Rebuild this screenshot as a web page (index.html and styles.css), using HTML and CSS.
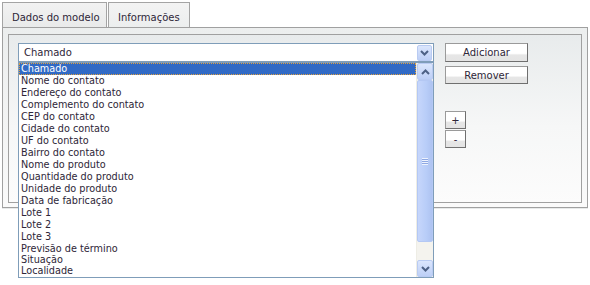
FILE: index.html
```html
<!DOCTYPE html>
<html>
<head>
<meta charset="utf-8">
<link rel="stylesheet" href="styles.css">
</head>
<body>
<div class="tabs">
  <div class="tab">Dados do modelo</div>
  <div class="tab active">Informações</div>
</div>
<div class="panel">
  <div class="box">
    <div class="left">
      <div class="select">
        <span class="value">Chamado</span>
        <span class="drop"><svg width="9" height="6" viewBox="0 0 9 6"><path d="M1 1 L4.5 4.5 L8 1" fill="none" stroke="#4d6185" stroke-width="2"/></svg></span>
      </div>
      <div class="listbox">
        <ul class="items">
          <li class="sel">Chamado</li>
          <li>Nome do contato</li>
          <li>Endereço do contato</li>
          <li>Complemento do contato</li>
          <li>CEP do contato</li>
          <li>Cidade do contato</li>
          <li>UF do contato</li>
          <li>Bairro do contato</li>
          <li>Nome do produto</li>
          <li>Quantidade do produto</li>
          <li>Unidade do produto</li>
          <li>Data de fabricação</li>
          <li>Lote 1</li>
          <li>Lote 2</li>
          <li>Lote 3</li>
          <li class="tight">Previsão de término</li>
          <li class="tight">Situação</li>
          <li class="tight">Localidade</li>
        </ul>
        <div class="scrollbar">
          <span class="sbtn"><svg width="9" height="6" viewBox="0 0 9 6"><path d="M1 5 L4.5 1.5 L8 5" fill="none" stroke="#4d6185" stroke-width="2"/></svg></span>
          <span class="thumb"><span class="grip"></span></span>
          <span class="track"></span>
          <span class="sbtn"><svg width="9" height="6" viewBox="0 0 9 6"><path d="M1 1 L4.5 4.5 L8 1" fill="none" stroke="#4d6185" stroke-width="2"/></svg></span>
        </div>
      </div>
    </div>
    <div class="buttons">
      <div class="btn wide">Adicionar</div>
      <div class="btn wide">Remover</div>
      <div class="small-group">
        <div class="btn small">+</div>
        <div class="btn small">-</div>
      </div>
    </div>
  </div>
</div>
</body>
</html>
```

FILE: styles.css
```css
html, body {
  margin: 0;
  padding: 0;
  background: #ffffff;
}
body {
  min-height: 285px;
  font-family: "DejaVu Sans", Verdana, sans-serif;
  font-size: 9.7px;
  color: #2e2638;
}
.tabs {
  display: flex;
  margin: 2px 0 0 2px;
  height: 25px;
}
.tab {
  box-sizing: border-box;
  width: 105px;
  height: 25px;
  border: 1px solid #a4a4a4;
  border-bottom: none;
  background: linear-gradient(#f2f2f2, #e9eaea);
  padding: 9px 0 0 9px;
  font-size: 10px;
}
.tab.active {
  width: 82px;
  margin-left: 1px;
  background: linear-gradient(#f3f3f3, #eceeee);
  padding-left: 9px;
}
.panel {
  box-sizing: border-box;
  width: 586px;
  height: 181px;
  margin-left: 2px;
  border: 1px solid #a0a0a0;
  padding: 6px 5px 5px 5px;
  background: linear-gradient(#eceeee, #fafafa);
  box-shadow: 0 1px 0 #e8eaea;
}
.box {
  box-sizing: border-box;
  height: 169px;
  border: 1px solid #a0a0a0;
  background: linear-gradient(#e8ebec 0%, #f6f7f7 55%, #fcfcfc 100%);
  display: flex;
  padding: 8px 0 0 9px;
  gap: 11px;
}
.left {
  position: relative;
  width: 416px;
}
.select {
  box-sizing: border-box;
  height: 19px;
  border: 1px solid #7f9db9;
  background: #ffffff;
  display: flex;
  align-items: center;
  justify-content: space-between;
  padding: 0 1px 0 5px;
  font-size: 10px;
}
.drop, .sbtn {
  box-sizing: border-box;
  width: 15px;
  height: 16px;
  border: 1px solid #b9cbf2;
  border-radius: 2px;
  background: linear-gradient(#dbe6fd, #bdcff6);
  display: flex;
  align-items: center;
  justify-content: center;
}
.listbox {
  position: absolute;
  left: 0;
  top: 19px;
  z-index: 5;
  width: 416px;
  height: 216px;
  box-sizing: border-box;
  border: 1px solid #7f9db9;
  background: #ffffff;
  display: flex;
}
.items {
  list-style: none;
  margin: 0;
  padding: 0;
  flex: 1;
  overflow: hidden;
}
.items li {
  height: 12px;
  line-height: 12px;
  padding-left: 2px;
  white-space: nowrap;
}
.items li.tight {
  height: 11px;
}
.items li.sel {
  background: #316ac5;
  color: #ffffff;
  outline: 1px dotted #e0a040;
  outline-offset: -1px;
}
.scrollbar {
  width: 16px;
  display: flex;
  flex-direction: column;
  background: #f4f3ee;
  border-left: 1px solid #eeede5;
}
.scrollbar .sbtn {
  width: 16px;
  height: 17px;
}
.thumb {
  box-sizing: border-box;
  height: 162px;
  border: 1px solid #b4c8f4;
  border-radius: 2px;
  background: linear-gradient(90deg, #c6d6fb, #b8cdf8 60%, #aec3f1);
  display: flex;
  align-items: center;
  justify-content: center;
}
.grip {
  width: 6px;
  height: 7px;
  background: repeating-linear-gradient(#eef3fe 0 1px, #8ea8e2 1px 2px);
}
.track {
  flex: 1;
}
.buttons {
  display: flex;
  flex-direction: column;
  gap: 4px;
}
.btn {
  box-sizing: border-box;
  border: 1px solid #707070;
  border-color: #9a9a9a #6f6f6f #6f6f6f #9a9a9a;
  background: linear-gradient(#ffffff 0%, #ffffff 55%, #e6e6e6 65%, #e4e4e4 100%);
  display: flex;
  align-items: center;
  justify-content: center;
  font-size: 10px;
  color: #2e2638;
}
.btn.wide {
  width: 83px;
  height: 19px;
}
.btn.wide + .btn.wide {
  height: 18px;
}
.small-group {
  display: flex;
  flex-direction: column;
  gap: 1px;
  margin-top: 23px;
}
.btn.small {
  width: 21px;
  height: 18px;
}
```
